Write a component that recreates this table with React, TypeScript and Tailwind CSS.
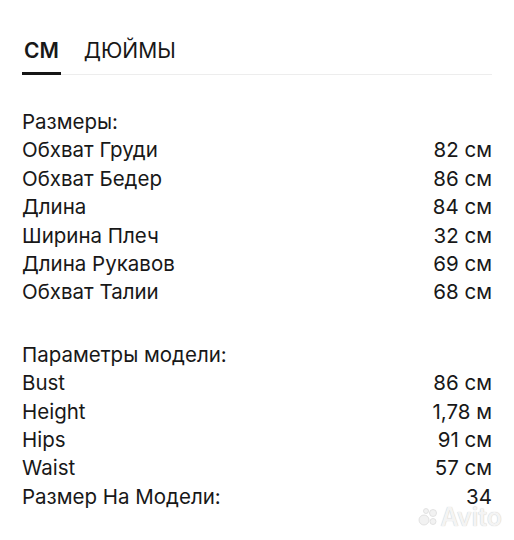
const sizes: [string, string][] = [
  ["Обхват Груди", "82 см"],
  ["Обхват Бедер", "86 см"],
  ["Длина", "84 см"],
  ["Ширина Плеч", "32 см"],
  ["Длина Рукавов", "69 см"],
  ["Обхват Талии", "68 см"],
];

const model: [string, string][] = [
  ["Bust", "86 см"],
  ["Height", "1,78 м"],
  ["Hips", "91 см"],
  ["Waist", "57 см"],
  ["Размер На Модели:", "34"],
];

function Rows({ title, rows }: { title: string; rows: [string, string][] }) {
  return (
    <div className="flex flex-col">
      <div className="leading-[28.4px]">{title}</div>
      {rows.map(([k, v]) => (
        <div key={k} className="flex justify-between leading-[28.4px]">
          <span>{k}</span>
          <span>{v}</span>
        </div>
      ))}
    </div>
  );
}

export default function App() {
  return (
    <div className="relative w-[514px] h-[540px] bg-white text-[#181818] px-[22px] pt-[37px] font-['Inter',sans-serif]">
      <div className="flex items-end border-b border-[#ededed]">
        <div className="flex gap-[23px] text-[21px] leading-[27px]">
          <div className="pb-[8px] border-b-[3px] border-[#151515] -mb-px font-semibold px-[2px]">СМ</div>
          <div className="pb-[8px]">ДЮЙМЫ</div>
        </div>
      </div>
      <div className="mt-[33px] text-[20.5px] flex flex-col gap-[34px]">
        <Rows title="Размеры:" rows={sizes} />
        <Rows title="Параметры модели:" rows={model} />
      </div>
      <div className="absolute right-[12px] bottom-[13px] flex items-center gap-[2px]">
        <svg width="20" height="20" viewBox="0 0 20 20" fill="#f2f2f2" stroke="#dcdcdc" strokeWidth="0.8">
          <circle cx="6" cy="13" r="5" />
          <circle cx="15" cy="14.5" r="3" />
          <circle cx="8" cy="4" r="2.5" />
          <circle cx="15" cy="6" r="3.5" />
        </svg>
        <span className="text-[25px] leading-[18px] font-semibold text-[#f4f4f4] [text-shadow:0_0_1px_#bdbdbd]">Avito</span>
      </div>
    </div>
  );
}
